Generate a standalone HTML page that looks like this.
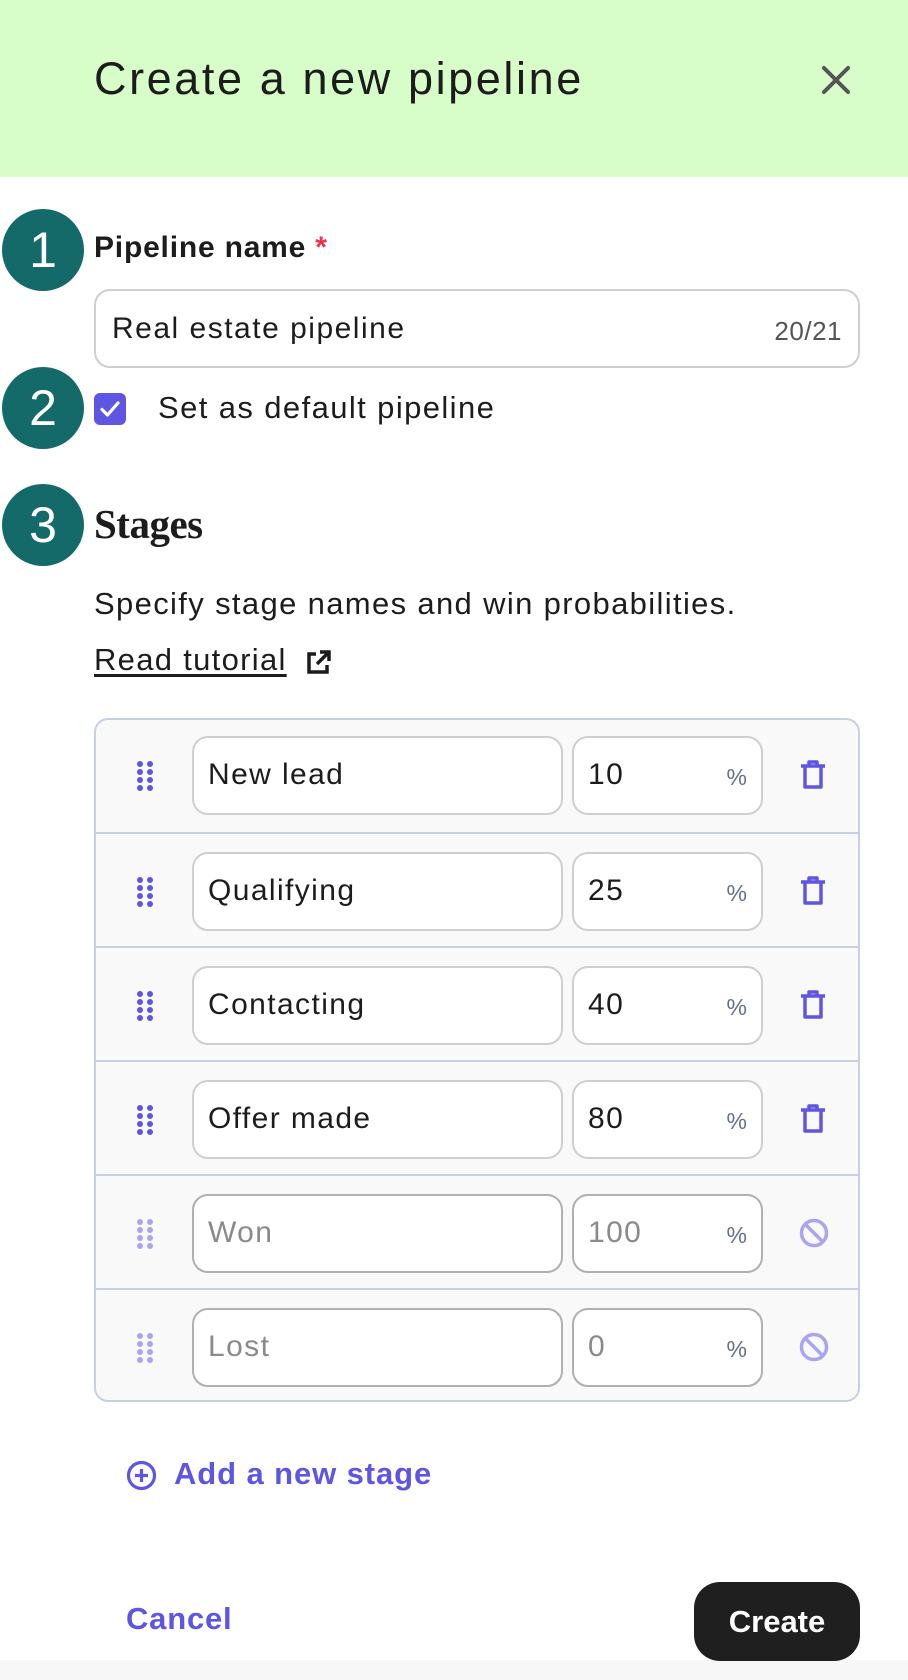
<!DOCTYPE html>
<html><head><meta charset="utf-8"><style>
*{box-sizing:border-box;margin:0;padding:0}
body{width:908px;height:1680px;background:#fff;font-family:"Liberation Sans",sans-serif;color:#1c1c1c;position:relative;overflow:hidden}
.hdr{position:absolute;left:0;top:0;width:908px;height:177px;background:#d7fdc8}
.title{position:absolute;left:94px;top:53px;font-size:45px;color:#1c1c1c;letter-spacing:2.6px}
.circ{position:absolute;left:2px;width:82px;height:82px;border-radius:50%;background:#136a68;color:#fff;font-size:50px;text-align:center;line-height:82px}
.abs{position:absolute}
.inp{position:absolute;background:#fff;border:2px solid #cfcfcf;border-radius:16px}
.row{position:absolute;left:96px;width:762px;height:114px;border-top:2px solid #c6d0de}
.dots{position:absolute;left:40px;top:42px}
.nm{left:96px;top:18px;width:371px;height:79px;font-size:30px;padding:20px 0 0 14px;letter-spacing:1.4px}
.pc{left:476px;top:18px;width:191px;height:79px;font-size:30px;padding:20px 0 0 14px;letter-spacing:1.4px}
.pc span{position:absolute;right:14px;top:26px;font-size:23px;color:#667085;letter-spacing:0}
.ic{position:absolute;left:702px;top:41px}
.dis{color:#8a8a8a}
</style></head><body>
<div class="hdr"></div>
<div class="title">Create a new pipeline</div>
<svg class="abs" style="left:821px;top:65px" width="30" height="30" viewBox="0 0 30 30"><path d="M3 3L27 27M27 3L3 27" stroke="#555" stroke-width="4" stroke-linecap="round"/></svg>

<div class="circ" style="top:209px">1</div>
<div class="circ" style="top:367px">2</div>
<div class="circ" style="top:484px">3</div>

<div class="abs" style="left:94px;top:231px;font-size:30px;font-weight:bold;letter-spacing:0.8px">Pipeline name <span style="color:#e8344e">*</span></div>
<div class="inp" style="left:94px;top:289px;width:766px;height:79px;font-size:30px;padding:21px 0 0 16px;letter-spacing:1.5px">Real estate pipeline<span style="position:absolute;right:16px;top:25px;font-size:26px;color:#555;letter-spacing:0.5px">20/21</span></div>

<div class="abs" style="left:94px;top:393px;width:32px;height:32px;border-radius:6px;background:#5f55e3"><svg width="32" height="32" viewBox="0 0 32 32"><path d="M8 16.5l5.5 5.5L24 10" stroke="#fff" stroke-width="3.2" fill="none" stroke-linecap="round" stroke-linejoin="round"/></svg></div>
<div class="abs" style="left:158px;top:390px;font-size:31px;letter-spacing:1.4px">Set as default pipeline</div>

<div class="abs" style="left:94px;top:500px;font-size:41px;font-weight:bold;font-family:'Liberation Serif',serif;letter-spacing:-0.5px">Stages</div>
<div class="abs" style="left:94px;top:586px;font-size:31px;letter-spacing:1.35px">Specify stage names and win probabilities.</div>
<div class="abs" style="left:94px;top:642px;font-size:31px;letter-spacing:1.3px;text-decoration:underline;text-underline-offset:4px">Read tutorial</div>
<svg class="abs" style="left:303px;top:648px" width="30" height="30" viewBox="0 0 30 30"><path d="M13 6H6v18h18v-7" stroke="#1c1c1c" stroke-width="3.5" fill="none"/><path d="M14 16L25 5M17 4h9v9" stroke="#1c1c1c" stroke-width="3.5" fill="none"/></svg>

<div class="abs" style="left:94px;top:718px;width:766px;height:684px;border:2px solid #c6d0de;border-radius:14px;background:#f9f9f9;overflow:hidden">
</div>
<div class="abs" style="left:94px;top:718px;width:766px;height:684px">
<div class="row" style="top:0;left:2px;border-top:none">
 <svg class="dots" width="18" height="32"><g fill="#5f55e3"><circle cx="4" cy="4" r="3"/><circle cx="14" cy="4" r="3"/><circle cx="4" cy="12" r="3"/><circle cx="14" cy="12" r="3"/><circle cx="4" cy="20" r="3"/><circle cx="14" cy="20" r="3"/><circle cx="4" cy="28" r="3"/><circle cx="14" cy="28" r="3"/></g></svg>
 <div class="inp nm">New lead</div><div class="inp pc">10<span>%</span></div>
 <svg class="ic" width="30" height="32" viewBox="0 0 30 32"><path d="M3 7h24M11 7V3h8v4M7 8v20h16V8" stroke="#5f55e3" stroke-width="3.5" fill="none" stroke-linejoin="round"/></svg>
</div>
<div class="row" style="top:114px;left:2px">
 <svg class="dots" width="18" height="32"><g fill="#5f55e3"><circle cx="4" cy="4" r="3"/><circle cx="14" cy="4" r="3"/><circle cx="4" cy="12" r="3"/><circle cx="14" cy="12" r="3"/><circle cx="4" cy="20" r="3"/><circle cx="14" cy="20" r="3"/><circle cx="4" cy="28" r="3"/><circle cx="14" cy="28" r="3"/></g></svg>
 <div class="inp nm">Qualifying</div><div class="inp pc">25<span>%</span></div>
 <svg class="ic" width="30" height="32" viewBox="0 0 30 32"><path d="M3 7h24M11 7V3h8v4M7 8v20h16V8" stroke="#5f55e3" stroke-width="3.5" fill="none" stroke-linejoin="round"/></svg>
</div>
<div class="row" style="top:228px;left:2px">
 <svg class="dots" width="18" height="32"><g fill="#5f55e3"><circle cx="4" cy="4" r="3"/><circle cx="14" cy="4" r="3"/><circle cx="4" cy="12" r="3"/><circle cx="14" cy="12" r="3"/><circle cx="4" cy="20" r="3"/><circle cx="14" cy="20" r="3"/><circle cx="4" cy="28" r="3"/><circle cx="14" cy="28" r="3"/></g></svg>
 <div class="inp nm">Contacting</div><div class="inp pc">40<span>%</span></div>
 <svg class="ic" width="30" height="32" viewBox="0 0 30 32"><path d="M3 7h24M11 7V3h8v4M7 8v20h16V8" stroke="#5f55e3" stroke-width="3.5" fill="none" stroke-linejoin="round"/></svg>
</div>
<div class="row" style="top:342px;left:2px">
 <svg class="dots" width="18" height="32"><g fill="#5f55e3"><circle cx="4" cy="4" r="3"/><circle cx="14" cy="4" r="3"/><circle cx="4" cy="12" r="3"/><circle cx="14" cy="12" r="3"/><circle cx="4" cy="20" r="3"/><circle cx="14" cy="20" r="3"/><circle cx="4" cy="28" r="3"/><circle cx="14" cy="28" r="3"/></g></svg>
 <div class="inp nm">Offer made</div><div class="inp pc">80<span>%</span></div>
 <svg class="ic" width="30" height="32" viewBox="0 0 30 32"><path d="M3 7h24M11 7V3h8v4M7 8v20h16V8" stroke="#5f55e3" stroke-width="3.5" fill="none" stroke-linejoin="round"/></svg>
</div>
<div class="row" style="top:456px;left:2px">
 <svg class="dots" width="18" height="32"><g fill="#aaa5f0"><circle cx="4" cy="4" r="3"/><circle cx="14" cy="4" r="3"/><circle cx="4" cy="12" r="3"/><circle cx="14" cy="12" r="3"/><circle cx="4" cy="20" r="3"/><circle cx="14" cy="20" r="3"/><circle cx="4" cy="28" r="3"/><circle cx="14" cy="28" r="3"/></g></svg>
 <div class="inp nm dis" style="border-color:#b0b0b0">Won</div><div class="inp pc dis" style="border-color:#b0b0b0">100<span>%</span></div>
 <svg class="ic" width="32" height="32" viewBox="0 0 32 32"><circle cx="16" cy="16" r="12.5" stroke="#aaa5f0" stroke-width="3.5" fill="none"/><path d="M7 7l18 18" stroke="#aaa5f0" stroke-width="3.5"/></svg>
</div>
<div class="row" style="top:570px;left:2px">
 <svg class="dots" width="18" height="32"><g fill="#aaa5f0"><circle cx="4" cy="4" r="3"/><circle cx="14" cy="4" r="3"/><circle cx="4" cy="12" r="3"/><circle cx="14" cy="12" r="3"/><circle cx="4" cy="20" r="3"/><circle cx="14" cy="20" r="3"/><circle cx="4" cy="28" r="3"/><circle cx="14" cy="28" r="3"/></g></svg>
 <div class="inp nm dis" style="border-color:#b0b0b0">Lost</div><div class="inp pc dis" style="border-color:#b0b0b0">0<span>%</span></div>
 <svg class="ic" width="32" height="32" viewBox="0 0 32 32"><circle cx="16" cy="16" r="12.5" stroke="#aaa5f0" stroke-width="3.5" fill="none"/><path d="M7 7l18 18" stroke="#aaa5f0" stroke-width="3.5"/></svg>
</div>
</div>

<svg class="abs" style="left:126px;top:1460px" width="31" height="31" viewBox="0 0 31 31"><circle cx="15.5" cy="15.5" r="13" stroke="#5f55e3" stroke-width="3.2" fill="none"/><path d="M15.5 9v13M9 15.5h13" stroke="#5f55e3" stroke-width="3.2"/></svg>
<div class="abs" style="left:174px;top:1456px;font-size:31px;font-weight:bold;color:#5f55e3;letter-spacing:0.9px">Add a new stage</div>

<div class="abs" style="left:0;top:1660px;width:908px;height:20px;background:#f7f7f7"></div>
<div class="abs" style="left:126px;top:1601px;font-size:31px;font-weight:bold;color:#5f55e3;letter-spacing:0.8px">Cancel</div>
<div class="abs" style="left:694px;top:1582px;width:166px;height:79px;border-radius:26px;background:#1f1f1f;color:#fff;font-size:31px;font-weight:bold;text-align:center;line-height:79px">Create</div>
</body></html>
